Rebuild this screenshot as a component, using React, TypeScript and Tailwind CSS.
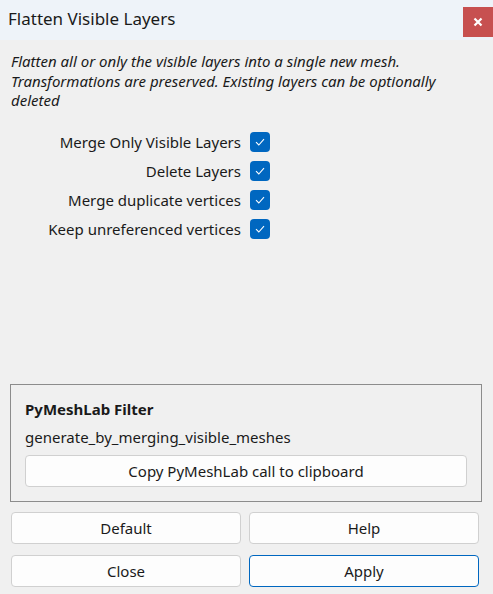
import React from 'react';

const options = [
  'Merge Only Visible Layers',
  'Delete Layers',
  'Merge duplicate vertices',
  'Keep unreferenced vertices',
];

const Check: React.FC = () => (
  <div className="w-5 h-5 rounded-[4px] bg-[#0067c0] flex items-center justify-center">
    <svg width="12" height="12" viewBox="0 0 12 12" fill="none">
      <path d="M2 6.2 L4.8 9 L10 3.2" stroke="white" strokeWidth="1.1" />
    </svg>
  </div>
);

const Btn: React.FC<{ label: string; primary?: boolean; className?: string }> = ({ label, primary, className }) => (
  <button
    className={
      'h-[32px] rounded-[4px] bg-[#fdfdfd] text-[15px] text-[#1a1a1a] border ' +
      (primary ? 'border-[#0067c0] ' : 'border-[#d0d0d0] ') +
      (className || '')
    }
  >
    {label}
  </button>
);

export default function App() {
  return (
    <div
      className="w-[493px] h-[594px] bg-[#f0f0f0] flex flex-col text-[#1a1a1a]"
      style={{ fontFamily: '"Segoe UI", "Noto Sans", sans-serif' }}
    >
      <div className="h-[40px] bg-[#eef3f9] flex items-start justify-between shrink-0">
        <span className="text-[17px] pl-[8px] pt-[6px]">Flatten Visible Layers</span>
        <div className="mt-[7px] w-[30px] h-[30px] bg-[#c75050] flex items-center justify-center">
          <svg width="10" height="10" viewBox="0 0 10 10">
            <path d="M1.5 1.5 L8.5 8.5 M8.5 1.5 L1.5 8.5" stroke="white" strokeWidth="2.2" />
          </svg>
        </div>
      </div>

      <p className="italic text-[15px] leading-[19.5px] px-[11px] pt-[12px]">
        Flatten all or only the visible layers into a single new mesh. Transformations are preserved. Existing layers can be optionally deleted
      </p>

      <div className="flex flex-col gap-[9px] mt-[21px]">
        {options.map((o) => (
          <div key={o} className="flex items-center h-[20px]">
            <span className="w-[250px] text-right text-[15px] leading-[20px] pr-[9px] whitespace-nowrap">{o}</span>
            <Check />
          </div>
        ))}
      </div>

      <div className="flex-1" />

      <div className="ml-[10px] mr-[11px] border border-[#8c8c8c] h-[118px] px-[14px] pt-[14px] flex flex-col">
        <span className="font-bold text-[15px] leading-[20px]">PyMeshLab Filter</span>
        <span className="text-[15px] leading-[20px] mt-[8px]">generate_by_merging_visible_meshes</span>
        <Btn label="Copy PyMeshLab call to clipboard" className="mt-[8px] h-[31px]" />
      </div>

      <div className="grid grid-cols-2 gap-x-[8px] gap-y-[11px] pl-[11px] pr-[14px] pt-[10px] pb-[7px]">
        <Btn label="Default" />
        <Btn label="Help" />
        <Btn label="Close" />
        <Btn label="Apply" primary />
      </div>
    </div>
  );
}
